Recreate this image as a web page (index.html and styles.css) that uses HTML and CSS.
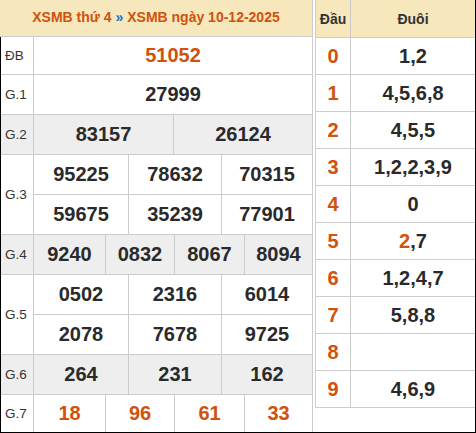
FILE: index.html
```html
<!DOCTYPE html>
<html lang="vi">
<head>
<meta charset="utf-8">
<title>XSMB 10-12-2025</title>
<link rel="stylesheet" href="styles.css">
</head>
<body>
<div class="page">
  <div class="results">
    <div class="title"><span class="hl">XSMB thứ 4</span> <span class="sep">»</span> <span class="hl">XSMB ngày 10-12-2025</span></div>
    <div class="prizes">
      <div class="row h37">
        <div class="label">ĐB</div>
        <div class="cells c1"><div class="cell red">51052</div></div>
      </div>
      <div class="row">
        <div class="label">G.1</div>
        <div class="cells c1"><div class="cell">27999</div></div>
      </div>
      <div class="row gray">
        <div class="label">G.2</div>
        <div class="cells c2"><div class="cell">83157</div><div class="cell">26124</div></div>
      </div>
      <div class="row">
        <div class="label">G.3</div>
        <div class="cells c3">
          <div class="cell">95225</div><div class="cell">78632</div><div class="cell">70315</div>
          <div class="cell">59675</div><div class="cell">35239</div><div class="cell">77901</div>
        </div>
      </div>
      <div class="row gray">
        <div class="label">G.4</div>
        <div class="cells c4"><div class="cell">9240</div><div class="cell">0832</div><div class="cell">8067</div><div class="cell">8094</div></div>
      </div>
      <div class="row">
        <div class="label">G.5</div>
        <div class="cells c3">
          <div class="cell">0502</div><div class="cell">2316</div><div class="cell">6014</div>
          <div class="cell">2078</div><div class="cell">7678</div><div class="cell">9725</div>
        </div>
      </div>
      <div class="row gray">
        <div class="label">G.6</div>
        <div class="cells c3"><div class="cell">264</div><div class="cell">231</div><div class="cell">162</div></div>
      </div>
      <div class="row last">
        <div class="label">G.7</div>
        <div class="cells c4"><div class="cell red">18</div><div class="cell red">96</div><div class="cell red">61</div><div class="cell red">33</div></div>
      </div>
    </div>
  </div>
  <div class="loto">
    <div class="lrow head"><div class="dau">Đầu</div><div class="duoi">Đuôi</div></div>
    <div class="lrow"><div class="dau red">0</div><div class="duoi">1,2</div></div>
    <div class="lrow"><div class="dau red">1</div><div class="duoi">4,5,6,8</div></div>
    <div class="lrow"><div class="dau red">2</div><div class="duoi">4,5,5</div></div>
    <div class="lrow"><div class="dau red">3</div><div class="duoi">1,2,2,3,9</div></div>
    <div class="lrow"><div class="dau red">4</div><div class="duoi">0</div></div>
    <div class="lrow"><div class="dau red">5</div><div class="duoi"><span class="red">2</span>,7</div></div>
    <div class="lrow"><div class="dau red">6</div><div class="duoi">1,2,4,7</div></div>
    <div class="lrow"><div class="dau red">7</div><div class="duoi">5,8,8</div></div>
    <div class="lrow"><div class="dau red">8</div><div class="duoi"></div></div>
    <div class="lrow"><div class="dau red">9</div><div class="duoi">4,6,9</div></div>
  </div>
</div>
</body>
</html>
```

FILE: styles.css
```css
* { box-sizing: border-box; }
html, body { margin: 0; padding: 0; background: #fff; }
body {
  font-family: "Liberation Sans", Arial, sans-serif;
  color: #222;
}
.page {
  width: 476px;
  height: 433px;
  display: flex;
  align-items: flex-start;
  border-right: 1px solid #000;
  border-bottom: 1px solid #000;
  overflow: hidden;
}
.results {
  width: 313px;
  height: 432px;
  border-right: 1px solid #ccc;
  flex: none;
}
.title {
  height: 37px;
  background: #f6e7bc;
  border-bottom: 1px solid #ccc;
  text-align: center;
  line-height: 35px;
  font-weight: bold;
  font-size: 14px;
}
.hl { color: #d0520c; }
.sep { color: #1e73be; }
.prizes {
  border-left: 1px solid #000;
}
.row {
  display: flex;
  border-bottom: 1px solid #ccc;
  min-height: 40px;
}
.row.h37 { min-height: 38px; }
.row.last { border-bottom: none; min-height: 37px; }
.row.gray { background: #eeeeee; }
.label {
  width: 33px;
  flex: none;
  border-right: 1px solid #ccc;
  display: flex;
  align-items: center;
  padding-left: 4px;
  font-size: 13.5px;
  color: #333;
}
.cells {
  flex: 1;
  display: grid;
}
.c1 { grid-template-columns: 1fr; }
.c2 { grid-template-columns: 139px 139px; }
.c3 { grid-template-columns: 94px 93px 91px; }
.c4 { grid-template-columns: 71px 69px 70px 68px; }
.cell {
  display: flex;
  align-items: center;
  justify-content: center;
  font-weight: bold;
  font-size: 20px;
  color: #2a2a2a;
  height: 39px;
}
.row.h37 .cell { height: 37px; }
.row.last .cell { height: 37px; }
.c2 .cell + .cell { border-left: 1px solid #ccc; }
.c3 .cell:not(:nth-child(3n+1)) { border-left: 1px solid #ccc; }
.c3 .cell:nth-child(n+4) { border-top: 1px solid #ccc; height: 40px; }
.c4 .cell + .cell { border-left: 1px solid #ccc; }
.red { color: #d0520c !important; }

.loto {
  width: 160px;
  flex: none;
  margin-left: 2px;
  border-left: 1px solid #ccc;
}
.lrow {
  display: flex;
  height: 37px;
  border-bottom: 1px solid #ccc;
}
.lrow.head {
  height: 38px;
  background: #f6e7bc;
}
.dau {
  width: 35px;
  flex: none;
  border-right: 1px solid #ccc;
  display: flex;
  align-items: center;
  justify-content: center;
  font-weight: bold;
  font-size: 20px;
}
.duoi {
  flex: 1;
  display: flex;
  align-items: center;
  justify-content: center;
  font-weight: bold;
  font-size: 20px;
  color: #2a2a2a;
}
.head .dau, .head .duoi {
  font-size: 14px;
  color: #333;
}
```
